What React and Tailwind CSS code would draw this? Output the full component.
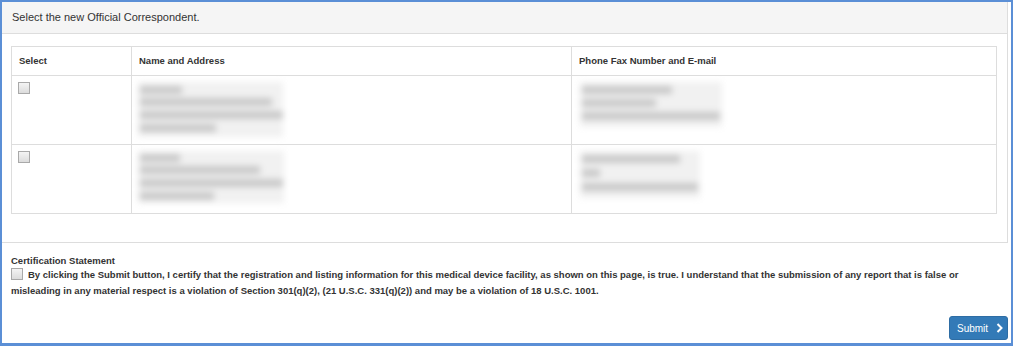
import React from 'react'

const font = { fontFamily: '"Liberation Sans", Arial, sans-serif' }

function Blur({ lines, w, h }) {
  return (
    <div className="relative bg-[#f1f1f1] blur-[3px]" style={{ width: w, height: h }}>
      {lines.map((l, i) => (
        <div key={i} className="absolute left-[2px] h-[8px] bg-[#c9c9c9]" style={{ top: l[0], width: l[1] }} />
      ))}
    </div>
  )
}

function Check({ className = '' }) {
  return <span className={`inline-block h-[12px] w-[12px] border border-[#a9a9a9] bg-gradient-to-b from-[#f4f4f4] to-[#dcdcdc] ${className}`} />
}

const rows = [
  {
    name: { w: 145, h: 55, lines: [[4, 42], [16, 132], [29, 143], [42, 76]] },
    phone: { w: 142, h: 45, lines: [[4, 90], [17, 74], [30, 138]] },
  },
  {
    name: { w: 146, h: 52, lines: [[3, 40], [15, 120], [28, 143], [41, 74]] },
    phone: { w: 120, h: 47, lines: [[4, 98], [18, 18], [32, 116]] },
  },
]

export default function App() {
  return (
    <div style={font} className="h-[346px] w-[1013px] border-2 border-b-[3px] border-[#5b8fd6] bg-white text-[#333]">
      <div className="mr-[3px] border-r border-b border-[#dddddd]">
        <div className="flex h-[32px] items-center border-b border-[#dddddd] bg-[#f5f5f5] pl-[10px] text-[11px]">
          Select the new Official Correspondent.
        </div>
        <div className="pt-[12px] pr-[10px] pb-[28px] pl-[9px]">
          <table className="w-[986px] border-collapse border border-[#dddddd] text-[9.5px]">
            <thead>
              <tr className="h-[29px]">
                <th className="w-[120px] border border-[#dddddd] px-[7px] text-left font-bold">Select</th>
                <th className="w-[440px] border border-[#dddddd] px-[7px] text-left font-bold">Name and Address</th>
                <th className="border border-[#dddddd] px-[7px] text-left font-bold">Phone Fax Number and E-mail</th>
              </tr>
            </thead>
            <tbody>
              {rows.map((r, i) => (
                <tr key={i} className="h-[69px] align-top">
                  <td className="border border-[#dddddd] px-[6px] pt-[6px]"><Check /></td>
                  <td className="border border-[#dddddd] px-[6px] pt-[6px]"><Blur {...r.name} /></td>
                  <td className="border border-[#dddddd] px-[8px] pt-[6px]"><Blur {...r.phone} /></td>
                </tr>
              ))}
            </tbody>
          </table>
        </div>
      </div>
      <div className="pt-[12px] pr-[3px] pl-[9px]">
        <div className="text-[9.5px] leading-[12px] font-bold">Certification Statement</div>
        <p className="pr-[6px] text-[9.5px] leading-[16px] font-bold">
          <Check className="mr-[5px] align-[-2px]" />
          By clicking the Submit button, I certify that the registration and listing information for this medical device facility, as shown on this page, is true. I understand that the submission of any report that is false or misleading in any material respect is a violation of Section 301(q)(2), (21 U.S.C. 331(q)(2)) and may be a violation of 18 U.S.C. 1001.
        </p>
        <div className="mt-[17px] flex justify-end">
          <button className="flex h-[24px] w-[59px] items-center gap-[8px] rounded-[3px] border border-[#2e6da4] bg-[#337ab7] pl-[7px] text-[10px] text-white">
            Submit
            <svg width="7" height="10" viewBox="0 0 7 10"><path d="M1.5 1l4 4-4 4" fill="none" stroke="white" strokeWidth="2" /></svg>
          </button>
        </div>
      </div>
    </div>
  )
}
